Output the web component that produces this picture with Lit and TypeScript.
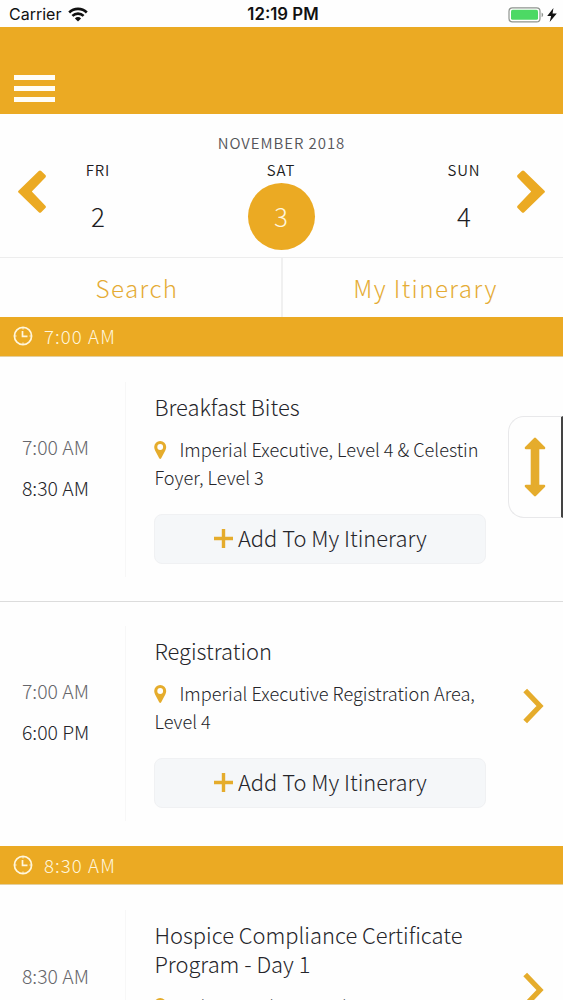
import { LitElement, html, css, svg } from "lit";
import { customElement, property } from "lit/decorators.js";

interface Session {
  start: string;
  end: string;
  title: string;
  location: string;
}

interface Slot {
  time: string;
  sessions: Session[];
}

const SLOTS: Slot[] = [
  {
    time: "7:00 AM",
    sessions: [
      {
        start: "7:00 AM",
        end: "8:30 AM",
        title: "Breakfast Bites",
        location: "Imperial Executive, Level 4 & Celestin Foyer, Level 3",
      },
      {
        start: "7:00 AM",
        end: "6:00 PM",
        title: "Registration",
        location: "Imperial Executive Registration Area, Level 4",
      },
    ],
  },
  {
    time: "8:30 AM",
    sessions: [
      {
        start: "8:30 AM",
        end: "4:30 PM",
        title: "Hospice Compliance Certificate Program - Day 1",
        location: "Celestin Salon, Level 3",
      },
    ],
  },
];

@customElement("status-bar")
export class StatusBar extends LitElement {
  static styles = css`
    :host {
      display: grid;
      grid-template-columns: 1fr auto 1fr;
      align-items: center;
      height: 27px;
      padding: 2px 6px 0 9px;
      box-sizing: border-box;
      font: 400 16px/25px Inter, sans-serif;
      color: #111;
    }
    .left,
    .right {
      display: flex;
      align-items: center;
    }
    .left {
      gap: 7px;
    }
    .right {
      justify-content: flex-end;
      gap: 3px;
    }
    .clock {
      font-weight: 600;
      font-size: 16.8px;
    }
    svg {
      display: block;
    }
  `;

  render() {
    return html`
      <div class="left">
        <span>Carrier</span>
        <svg width="20" height="15" viewBox="0 0 20 15" fill="none" stroke="#111" stroke-width="2.6">
          <path d="M1.2 5.5a12.6 12.6 0 0 1 17.6 0" />
          <path d="M4.4 8.9a8 8 0 0 1 11.2 0" />
          <path d="M10 14.6L6.9 11.4a4.4 4.4 0 0 1 6.2 0z" fill="#111" stroke="none" />
        </svg>
      </div>
      <span class="clock">12:19 PM</span>
      <div class="right">
        <svg width="36" height="16" viewBox="0 0 36 16">
          <rect x="1" y="0.8" width="31" height="14" rx="3.4" fill="#fff" stroke="#8f948f" stroke-width="1.2" />
          <rect x="3" y="2.8" width="27" height="10" rx="1.6" fill="#4cd964" />
          <path d="M33.6 5.4a2.6 2.6 0 0 1 0 4.8z" fill="#8f948f" />
        </svg>
        <svg width="10" height="14" viewBox="0 0 9 14" preserveAspectRatio="none">
          <path d="M5.8 0L0.2 7.9h3.5L2.4 14L8.8 5.6H5z" fill="#111" />
        </svg>
      </div>
    `;
  }
}

@customElement("date-strip")
export class DateStrip extends LitElement {
  static styles = css`
    :host {
      display: flex;
      flex-direction: column;
      height: 143px;
      box-sizing: border-box;
      padding-top: 18px;
      color: #1d1d22;
    }
    .month {
      text-align: center;
      font-size: 15px;
      font-weight: 350;
      line-height: 21px;
      letter-spacing: 0.95px;
      color: #55555a;
    }
    .row {
      display: grid;
      grid-template-columns: 65px 66px 1fr 66px 66px;
      margin-top: 7px;
    }
    .arrow {
      padding-top: 10px;
    }
    .arrow.prev {
      padding-left: 17px;
    }
    .arrow.next {
      padding-left: 19px;
    }
    .day {
      display: flex;
      flex-direction: column;
      align-items: center;
      font-size: 15px;
      font-weight: 350;
      line-height: 20px;
      letter-spacing: 0.9px;
    }
    .num {
      width: 67px;
      height: 67px;
      margin-top: 3px;
      border-radius: 50%;
      font-size: 26px;
      font-weight: 300;
      line-height: 66px;
      letter-spacing: 0;
      text-align: center;
    }
    .selected .num {
      background: #ebaa23;
      color: #fff6dc;
    }
    svg {
      display: block;
    }
  `;

  render() {
    return html`
      <div class="month">NOVEMBER 2018</div>
      <div class="row">
        <div class="arrow prev">
          <svg width="30" height="44" viewBox="0 0 30 44">
            <path d="M1.5 20.8L21.8 0.9q1.2-1 2.4 0l4.2 4.2q1 1.2 0 2.4L14.8 21.5l13.6 14.2q1 1.2 0 2.4l-4.2 4.2q-1.2 1-2.4 0L1.5 22.6q-.9-.9 0-1.8z" fill="#ebaa23" />
          </svg>
        </div>
        <div class="day">FRI<span class="num">2</span></div>
        <div class="day selected">SAT<span class="num">3</span></div>
        <div class="day">SUN<span class="num">4</span></div>
        <div class="arrow next">
          <svg width="30" height="44" viewBox="0 0 30 44">
            <path d="M28.5 20.8L8.2 0.9q-1.2-1-2.4 0l-4.2 4.2q-1 1.2 0 2.4L15.2 21.5L1.6 35.7q-1 1.2 0 2.4l4.2 4.2q1.2 1 2.4 0l20.3-19.7q.9-.9 0-1.8z" fill="#ebaa23" />
          </svg>
        </div>
      </div>
    `;
  }
}

@customElement("session-row")
export class SessionRow extends LitElement {
  static styles = css`
    :host {
      display: grid;
      grid-template-columns: 126px 360px 1fr;
      padding: 25px 0 24px;
      color: #25252a;
      font-weight: 300;
    }
    .times {
      display: flex;
      flex-direction: column;
      gap: 13px;
      padding: 51.5px 0 0 22px;
      border-right: 1px solid #f7f7f7;
      font-size: 19.4px;
      line-height: 28px;
    }
    .start {
      color: #66666b;
    }
    .body {
      padding: 10px 0 13px 28.4px;
    }
    .title {
      padding-right: 10px;
      font-size: 21.9px;
      line-height: 29px;
    }
    .location {
      margin-top: 14px;
      font-size: 18.15px;
      line-height: 28.5px;
    }
    .pin {
      display: inline-block;
      margin-right: 8px;
      vertical-align: -2px;
    }
    .add {
      display: flex;
      align-items: center;
      justify-content: center;
      gap: 5px;
      width: 332px;
      height: 50px;
      margin-top: 22px;
      padding: 0 0 2px;
      border: 1px solid #f0f1f3;
      border-radius: 8px;
      background: #f5f7f9;
      color: inherit;
      font: inherit;
      font-size: 21.9px;
    }
    .add svg {
      margin-top: 1px;
    }
    .go {
      padding: 62px 0 0 36px;
    }
    svg {
      display: block;
    }
  `;

  @property({ attribute: false }) session!: Session;

  render() {
    const { start, end, title, location } = this.session;
    return html`
      <div class="times">
        <span class="start">${start}</span>
        <span>${end}</span>
      </div>
      <div class="body">
        <div class="title">${title}</div>
        <div class="location">
          <svg class="pin" width="13" height="18" viewBox="0 0 13 18">
            <path
              fill-rule="evenodd"
              d="M6.2 0a6 6 0 0 1 6 6c0 1.4-.4 2.4-.9 3.4L7.2 17.2q-1 1.4-2 0L1.1 9.4C.6 8.4.2 7.4.2 6a6 6 0 0 1 6-6zM6.2 3.1a2.9 2.9 0 1 0 0 5.8a2.9 2.9 0 0 0 0-5.8z"
              fill="#e5ac2c"
            />
          </svg>
          ${location}
        </div>
        <button class="add">
          <svg width="19" height="19" viewBox="0 0 19 19">
            <path d="M9.5 0v19M0 9.5h19" stroke="#e5ac2c" stroke-width="3.4" />
          </svg>
          Add To My Itinerary
        </button>
      </div>
      <div class="go">
        <svg width="22" height="36" viewBox="0 0 22 36">
          <path d="M3.2 2.5L18 18L3.2 33.5" fill="none" stroke="#e5ac2c" stroke-width="5.2" />
        </svg>
      </div>
    `;
  }
}

@customElement("app-root")
export class AppRoot extends LitElement {
  static styles = css`
    :host {
      display: block;
      position: relative;
      width: 563px;
      height: 1000px;
      overflow: hidden;
      background: #fefefe;
      font-family: "Noto Sans CJK SC", "Open Sans", sans-serif;
    }
    .header {
      display: flex;
      height: 87px;
      box-sizing: border-box;
      padding: 48px 0 0 14px;
      background: #ebaa23;
    }
    .menu {
      display: flex;
      flex-direction: column;
      gap: 6px;
      width: 41px;
    }
    .menu span {
      height: 5px;
      background: #fffdf6;
    }
    .tabs {
      display: grid;
      grid-template-columns: 283px 1fr;
      height: 60px;
      box-sizing: border-box;
      border-top: 1px solid #ededed;
      font-size: 24.2px;
      font-weight: 300;
      line-height: 59px;
      letter-spacing: 1.4px;
      text-align: center;
      color: #e5ac35;
    }
    .tabs span:first-child {
      padding-right: 7px;
      border-right: 2px solid #f0f0f0;
    }
    .tabs span:last-child {
      padding-left: 5px;
    }
    .slot {
      display: flex;
      align-items: center;
      gap: 11px;
      height: 39.5px;
      box-sizing: border-box;
      padding: 0 0 1px 13px;
      border-bottom: 1px solid #e3cf9f;
      background: #ebaa23;
      color: #fff6dc;
      font-size: 18.6px;
      font-weight: 300;
      letter-spacing: 1.1px;
    }
    .slot svg {
      margin-top: 1px;
    }
    session-row + session-row {
      padding: 24px 0 25px;
      border-top: 1px solid #dcdcdc;
    }
    .scroller {
      position: absolute;
      top: 416px;
      right: 0;
      display: flex;
      align-items: center;
      width: 55px;
      height: 102px;
      box-sizing: border-box;
      padding-left: 15px;
      border: 1px solid #e8e8ea;
      border-right: 2px solid #444;
      border-radius: 16px 0 0 16px;
      background: #fefefe;
    }
    svg {
      display: block;
    }
  `;

  private _clock() {
    return svg`
      <circle cx="9.8" cy="10" r="8.6" />
      <path d="M9.3 5v5.3h5" />
      <path d="M9.8 1.5v2M9.8 16.5v2M1.3 10h2M16.3 10h2" stroke-width="1" />
    `;
  }

  render() {
    return html`
      <status-bar></status-bar>
      <div class="header">
        <div class="menu"><span></span><span></span><span></span></div>
      </div>
      <date-strip></date-strip>
      <div class="tabs"><span>Search</span><span>My Itinerary</span></div>
      ${SLOTS.map(
        (slot) => html`
          <div class="slot">
            <svg width="20" height="20" viewBox="0 0 19.6 20" fill="none" stroke="#fff6dc" stroke-width="1.7">
              ${this._clock()}
            </svg>
            ${slot.time}
          </div>
          ${slot.sessions.map((s) => html`<session-row .session=${s}></session-row>`)}
        `
      )}
      <div class="scroller">
        <svg width="22" height="60" viewBox="0 0 22 60">
          <path
            d="M11 2L20 11H14V49H20L11 58L2 49H8V11H2z"
            fill="#e5ac2c"
            stroke="#e5ac2c"
            stroke-width="2.6"
            stroke-linejoin="round"
          />
        </svg>
      </div>
    `;
  }
}
